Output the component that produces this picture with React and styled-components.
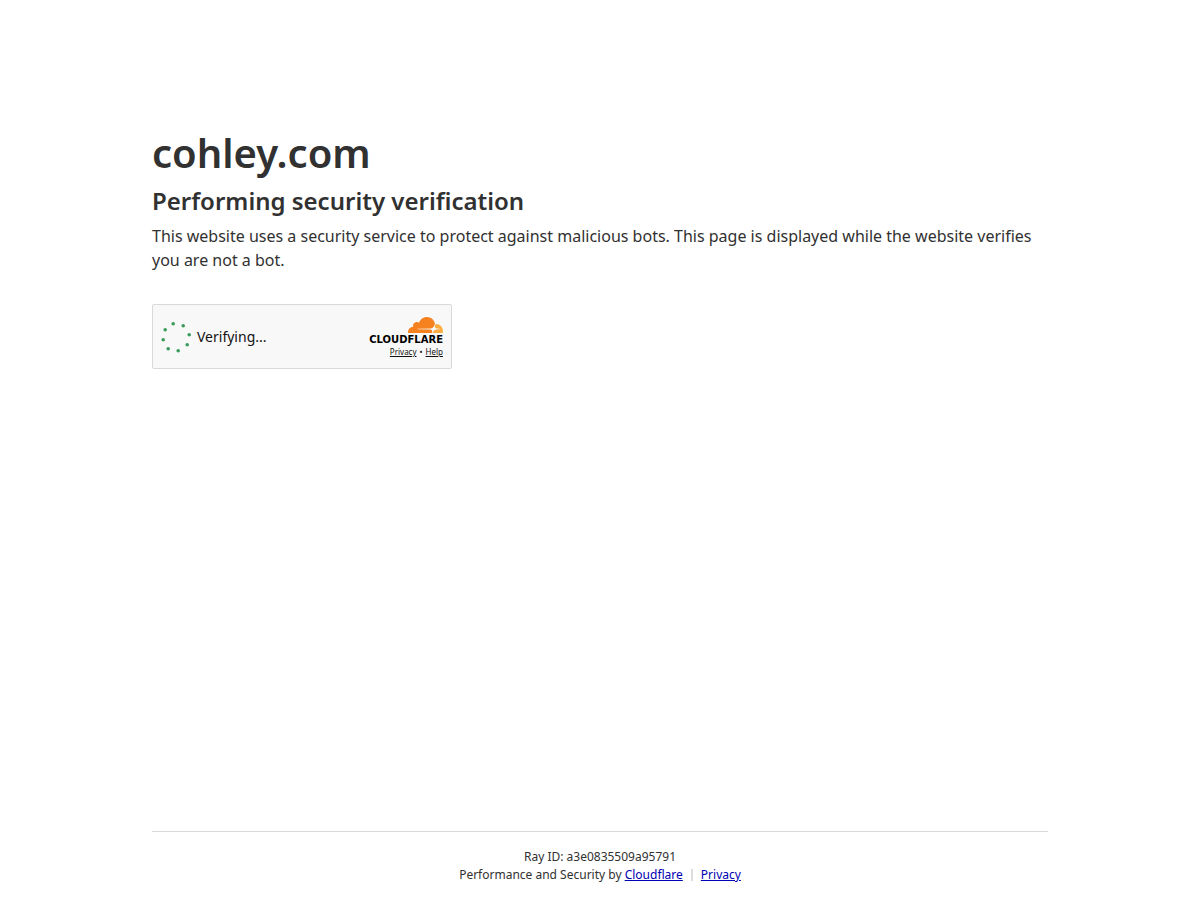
import React from 'react'
import styled, { createGlobalStyle } from 'styled-components'

/* STYLES */
const GlobalStyle = createGlobalStyle`
  * {
    box-sizing: border-box;
    margin: 0;
    padding: 0;
  }

  body {
    background: #fff;
    color: #313131;
    font-family: "Noto Sans", sans-serif;
    font-size: 16px;
    line-height: 24px;
  }
`

const Page = styled.div`
  display: flex;
  flex-direction: column;
  min-height: 100vh;
`

const Main = styled.main`
  flex: 1;
  width: 100%;
  max-width: 960px;
  margin: 0 auto;
  padding: 123px 32px 32px;
`

const Title = styled.h1`
  font-size: 40px;
  font-weight: 600;
  line-height: 60px;
`

const Subtitle = styled.h2`
  font-size: 24px;
  font-weight: 600;
  line-height: 36px;
`

const Message = styled.p`
  margin: 5px 0 32px;
`

const Widget = styled.section`
  display: flex;
  align-items: center;
  justify-content: space-between;
  width: 300px;
  max-width: 100%;
  height: 65px;
  padding: 0 8px;
  border: 1px solid #d9d9d9;
  border-radius: 2px;
  background: #f8f8f8;
  color: #111;
`

const Status = styled.div`
  display: flex;
  align-items: center;
  gap: 6px;
  font-size: 14px;
`

const Brand = styled.div`
  display: flex;
  flex-direction: column;
  align-items: flex-end;
  padding-top: 2px;
`

const Cloud = styled.svg`
  display: block;
`

const Wordmark = styled.span`
  color: #000;
  font-family: "DejaVu Sans", sans-serif;
  font-size: 10px;
  font-weight: 700;
  line-height: 13px;
`

const WidgetLinks = styled.div`
  display: flex;
  gap: 3px;
  font-size: 8px;
  line-height: 12px;

  a {
    color: inherit;
  }
`

const Footer = styled.footer`
  width: 100%;
  max-width: 960px;
  margin: 0 auto;
  padding: 0 32px;
  font-size: 12px;
  line-height: 18px;
  text-align: center;
`

const FooterInner = styled.div`
  padding: 16px 0;
  border-top: 1px solid #d9d9d9;
`

const FooterRow = styled.div`
  display: flex;
  flex-wrap: wrap;
  justify-content: center;
`

const FooterLink = styled.a`
  color: #0000b3;
`

const Divider = styled.span`
  width: 2px;
  height: 12px;
  margin: 3px 8px;
  background: #dedede;
`

/* PRESENTATION */
const dots = [
  [12, 2],
  [22, 4],
  [28, 13],
  [26, 23],
  [17, 29],
  [7, 27],
  [2, 18],
  [4, 8]
]

const Spinner = () => (
  <svg width="30" height="30" viewBox="0 0 30 30" overflow="visible" aria-hidden="true">
    {dots.map(([x, y]) => (
      <circle key={`${x}-${y}`} cx={x + 0.2} cy={y - 0.3} r="1.8" fill="#3a9c5c" />
    ))}
  </svg>
)

const CloudLogo = () => (
  <Cloud width="35" height="16" viewBox="38 0 35 16" aria-hidden="true">
    <path
      fill="#f6821f"
      d="M61.885 15.784l.178-.626c.213-.745.134-1.434-.223-1.94-.328-.466-.875-.741-1.54-.773l-12.58-.161a.25.25 0 0 1-.198-.107.26.26 0 0 1-.029-.23.33.33 0 0 1 .293-.227l12.697-.163c1.506-.07 3.137-1.31 3.708-2.823l.724-1.92a.45.45 0 0 0 .019-.254C64.112 2.807 60.811 0 56.865 0c-3.636 0-6.723 2.382-7.83 5.692a3.76 3.76 0 0 0-2.612-.734 3.77 3.77 0 0 0-3.224 4.691c-2.85.084-5.135 2.454-5.135 5.366 0 .26.02.52.057.777a.25.25 0 0 0 .243.215l23.233.003a.3.3 0 0 0 .288-.226z"
    />
    <path
      fill="#fbad41"
      d="M66.076 6.953l-.349.009a.2.2 0 0 0-.181.147l-.495 1.734c-.212.745-.133 1.434.224 1.94.328.466.875.74 1.539.772l2.682.165a.25.25 0 0 1 .217.338.33.33 0 0 1-.292.227l-2.787.164c-1.513.07-3.143 1.31-3.713 2.822l-.202.539a.15.15 0 0 0 .149.205h9.6a.26.26 0 0 0 .247-.186 7.1 7.1 0 0 0 .256-1.906c-.002-3.849-3.088-6.97-6.895-6.97z"
    />
  </Cloud>
)

const App = () => (
  <Page>
    <GlobalStyle />
    <Main>
      <Title>cohley.com</Title>
      <Subtitle>Performing security verification</Subtitle>
      <Message>
        This website uses a security service to protect against malicious bots. This page is
        displayed while the website verifies you are not a bot.
      </Message>
      <Widget>
        <Status role="status">
          <Spinner />
          <span>Verifying...</span>
        </Status>
        <Brand>
          <CloudLogo />
          <Wordmark>CLOUDFLARE</Wordmark>
          <WidgetLinks>
            <a href="#privacy">Privacy</a>
            <span>•</span>
            <a href="#help">Help</a>
          </WidgetLinks>
        </Brand>
      </Widget>
    </Main>
    <Footer>
      <FooterInner>
        <p>Ray ID: a3e0835509a95791</p>
        <FooterRow>
          <span>
            Performance and Security by <FooterLink href="#cloudflare">Cloudflare</FooterLink>
          </span>
          <Divider />
          <FooterLink href="#privacy-policy">Privacy</FooterLink>
        </FooterRow>
      </FooterInner>
    </Footer>
  </Page>
)

export default App
